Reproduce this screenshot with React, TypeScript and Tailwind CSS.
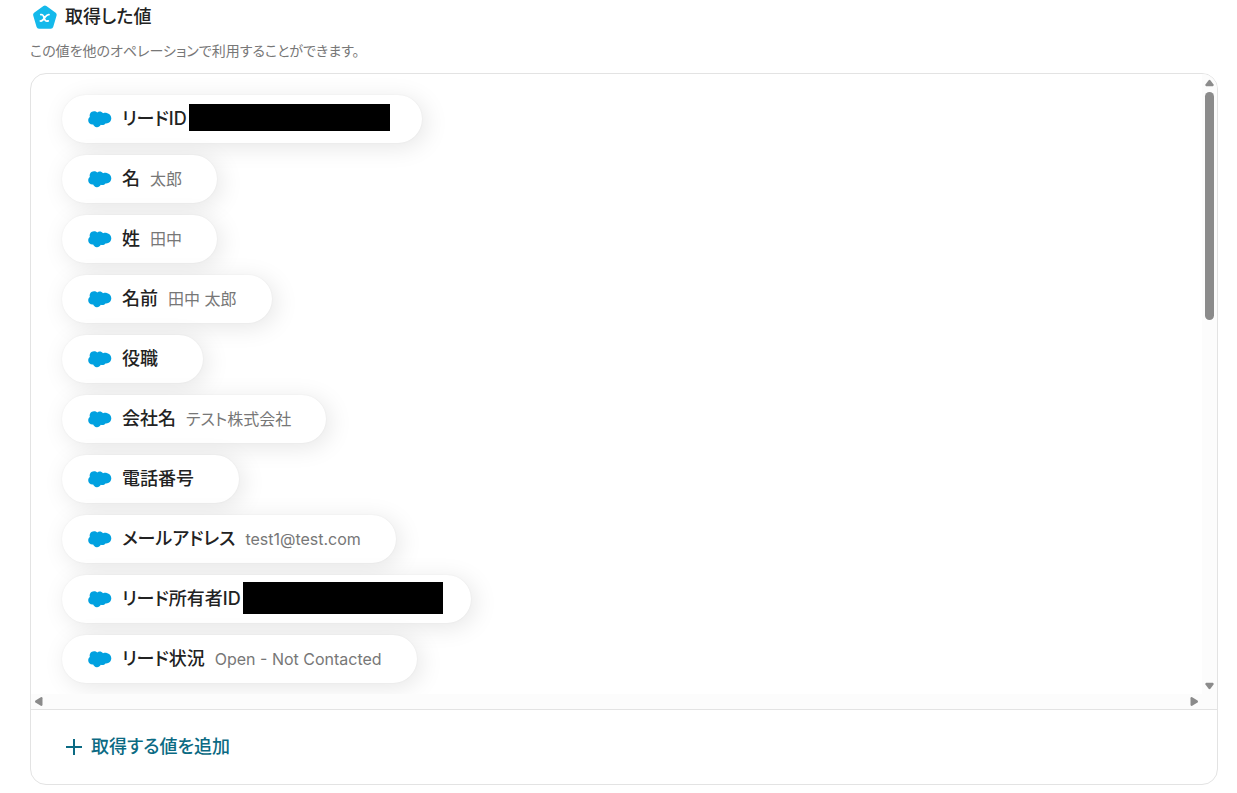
import React from 'react';

interface FieldValue {
  label: string;
  value?: string;
  mask?: string;
}

const fields: FieldValue[] = [
  { label: 'リードID', mask: 'w-[201px] h-[27px] mb-[3px] -mr-[3px]' },
  { label: '名', value: '太郎' },
  { label: '姓', value: '田中' },
  { label: '名前', value: '田中 太郎' },
  { label: '役職' },
  { label: '会社名', value: 'テスト株式会社' },
  { label: '電話番号' },
  { label: 'メールアドレス', value: 'test1@test.com' },
  { label: 'リード所有者ID', mask: 'w-[200px] h-8 mb-0.5 -mr-[7px]' },
  { label: 'リード状況', value: 'Open - Not Contacted' },
];

const VariableIcon: React.FC = () => (
  <svg width="26" height="26" viewBox="0 0 26 26" aria-hidden="true">
    <path
      d="M12.9 4 22.2 10.800 18.8 22.200H7L3.600 10.800Z"
      fill="#14b9eb"
      stroke="#14b9eb"
      strokeWidth="5"
      strokeLinejoin="round"
    />
    <path
      d="M8.800 10.600C10.600 10.200 11.200 10.800 12 13.400 12.800 16.600 13.800 17.600 16.200 16.900M17 10.600C15.400 10.200 14 11.600 12.600 13.700 11.200 15.900 10 17.400 8.400 17"
      fill="none"
      stroke="#fff"
      strokeWidth="1.8"
      strokeLinecap="round"
    />
  </svg>
);

const CloudIcon: React.FC = () => (
  <svg width="24" height="18" viewBox="0 0 24 18" className="shrink-0" fill="#00a1e0" aria-hidden="true">
    <path d="M9.300 2.400C10.800 1.200 13.600 1.300 15 3.300 16.300 2.700 17.500 2.700 18.700 2.900 21.400 3.300 23.300 5.600 23.300 8.300 23.300 11.500 20.600 13.900 17.400 13.400 16.500 14.900 14.400 15.500 12.800 14.800 11.900 16.600 10.300 17.400 8.600 17.200 7 17 5.800 16 5.200 14.500 2.400 14.900.200 12.900.200 10.300.200 8.900.900 7.800 1.900 7.100 1 4 2.900 1.200 6 1.200 7.300 1.200 8.500 1.600 9.300 2.400Z" />
  </svg>
);

const PlusIcon: React.FC = () => (
  <svg width="16" height="16" viewBox="0 0 16 16" aria-hidden="true">
    <path d="M8 0v16M0 8h16" stroke="#0b6a83" strokeWidth="2" />
  </svg>
);

const FieldChip: React.FC<{ field: FieldValue }> = ({ field }) => (
  <li className="flex h-12 items-center rounded-full bg-white pl-[26px] pr-[35px] shadow-[4px_4px_24px_rgba(0,0,0,0.1),0_0_2px_rgba(0,0,0,0.06)]">
    <CloudIcon />
    <span className="ml-2.5 text-[18px] leading-6 font-medium whitespace-nowrap text-[#222]">{field.label}</span>
    {field.mask ? (
      <span className={`ml-0.5 bg-black ${field.mask}`} />
    ) : (
      <span className="ml-2.5 text-[16px] leading-6 whitespace-nowrap text-[#777]">{field.value}</span>
    )}
  </li>
);

const VerticalBar: React.FC = () => (
  <div className="flex w-[15px] flex-col items-center bg-[#fcfcfc] pt-[5px] pb-1">
    <svg width="9" height="8" viewBox="0 0 10 8" fill="#8b8b8b" aria-hidden="true">
      <path d="M5 .5Q5.600.500 6 1L9.500 5.800Q10 7.500 8.600 7.500H1.400Q0 7.500.500 5.800L4 1Q4.400.500 5 .500Z" />
    </svg>
    <div className="mt-[5px] h-[228px] w-[9px] rounded-full bg-[#8b8b8b]" />
    <svg width="9" height="8" viewBox="0 0 10 8" fill="#8b8b8b" className="mt-auto" aria-hidden="true">
      <path d="M5 7.500Q5.600 7.500 6 7L9.500 2.200Q10 .500 8.600.500H1.400Q0 .500.500 2.200L4 7Q4.400 7.500 5 7.500Z" />
    </svg>
  </div>
);

const HorizontalBar: React.FC = () => (
  <div className="flex h-[15px] items-center justify-between bg-[#fcfcfc] pl-1 pr-[19px]">
    <svg width="8" height="9" viewBox="0 0 8 9" fill="#8b8b8b" aria-hidden="true">
      <path d="M0 4.500Q0 4 .500 3.600L5.800.200Q7.500-.300 7.500 1.200V7.800Q7.500 9.300 5.800 8.800L.500 5.400Q0 5 0 4.500Z" />
    </svg>
    <svg width="8" height="9" viewBox="0 0 8 9" fill="#8b8b8b" aria-hidden="true">
      <path d="M8 4.500Q8 4 7.500 3.600L2.200.200Q.500-.300.500 1.200V7.800Q.500 9.300 2.200 8.800L7.500 5.400Q8 5 8 4.500Z" />
    </svg>
  </div>
);

const App: React.FC = () => {
  return (
    <main className="bg-white pt-1 pr-[19px] pb-2 pl-[30px] font-['Inter','Noto_Sans_CJK_JP',sans-serif] [font-feature-settings:'palt']">
      <div className="flex items-center gap-[7px] pl-0.5">
        <VariableIcon />
        <h2 className="text-[18px] leading-[26px] font-medium text-[#222]">取得した値</h2>
      </div>
      <p className="mt-[11px] text-[14px] leading-5 text-[#777]">
        この値を他のオペレーションで利用することができます。
      </p>

      <section className="mt-3 overflow-hidden rounded-2xl border border-[#e3e3e3]">
        <div className="flex">
          <ul className="flex h-[620px] min-w-0 flex-1 flex-col items-start gap-3 overflow-auto px-[31px] pt-[21px] [scrollbar-width:none]">
            {fields.map((field) => (
              <FieldChip key={field.label} field={field} />
            ))}
          </ul>
          <VerticalBar />
        </div>
        <HorizontalBar />
        <div className="border-t border-[#e3e3e3] py-6 pl-[35px]">
          <button type="button" className="flex items-center gap-[9px] text-[18px] leading-[26px] font-medium text-[#0b6a83]">
            <PlusIcon />
            取得する値を追加
          </button>
        </div>
      </section>
    </main>
  );
};

export default App;
